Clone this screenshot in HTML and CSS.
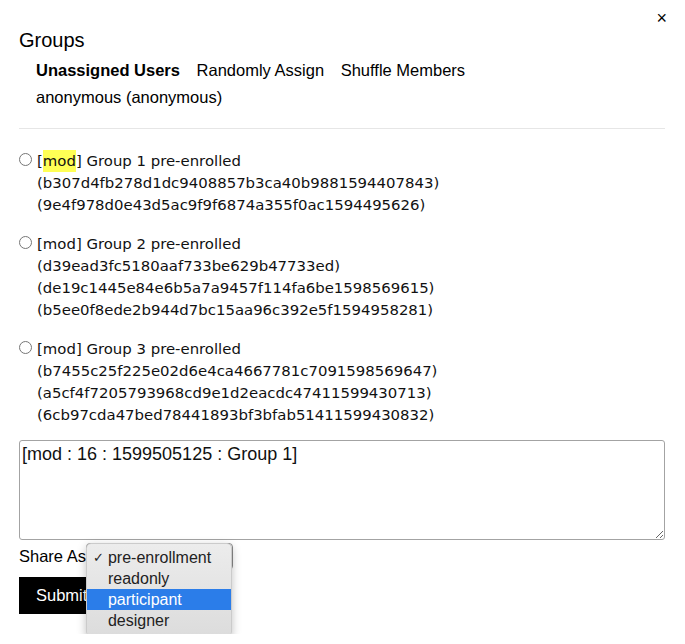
FILE: index.html
```html
<!DOCTYPE html>
<html lang="en">
<head>
  <meta charset="UTF-8" />
  <meta name="viewport" content="width=device-width, initial-scale=1.0"/>
  <title>Groups</title>
  <link rel="stylesheet" href="styles.css">
</head>
<body>

  <div class="modal">
    <button class="close">×</button>
    <h2>Groups</h2>

    <div class="tabs">
      <span class="tab active">Unassigned Users</span>
      <span class="tab">Randomly Assign</span>
      <span class="tab">Shuffle Members</span>
    </div>
    <div class="users">anonymous (anonymous)</div>

    <hr>

    <ul class="group-list">
      <li class="group">
        <input type="radio" name="group">
        <div class="group-text">
          <div>[<mark>mod</mark>] Group 1 pre-enrolled</div>
          <div>(b307d4fb278d1dc9408857b3ca40b9881594407843)</div>
          <div>(9e4f978d0e43d5ac9f9f6874a355f0ac1594495626)</div>
        </div>
      </li>
      <li class="group">
        <input type="radio" name="group">
        <div class="group-text">
          <div>[mod] Group 2 pre-enrolled</div>
          <div>(d39ead3fc5180aaf733be629b47733ed)</div>
          <div>(de19c1445e84e6b5a7a9457f114fa6be1598569615)</div>
          <div>(b5ee0f8ede2b944d7bc15aa96c392e5f1594958281)</div>
        </div>
      </li>
      <li class="group">
        <input type="radio" name="group">
        <div class="group-text">
          <div>[mod] Group 3 pre-enrolled</div>
          <div>(b7455c25f225e02d6e4ca4667781c7091598569647)</div>
          <div>(a5cf4f7205793968cd9e1d2eacdc47411599430713)</div>
          <div>(6cb97cda47bed78441893bf3bfab51411599430832)</div>
        </div>
      </li>
    </ul>

    <textarea class="share-text">[mod : 16 : 1599505125 : Group 1]</textarea>

    <div class="share-row">
      <span>Share As</span>
      <div class="select-box">
        <!-- open dropdown -->
        <ul class="options">
          <li class="checked">pre-enrollment</li>
          <li>readonly</li>
          <li class="hover">participant</li>
          <li>designer</li>
        </ul>
      </div>
    </div>

    <button class="submit">Submit</button>
  </div>

</body>
</html>
```

FILE: styles.css
```css
* { box-sizing: border-box; }
body {
  margin: 0;
  font-family: 'Liberation Sans', Arial, sans-serif;
  color: #000;
  background: #fff;
}
.modal {
  position: relative;
  padding: 28px 20px 20px 19px;
}
.close {
  position: absolute;
  top: 8px;
  right: 18px;
  border: none;
  background: none;
  padding: 0;
  font-family: 'Liberation Sans', Arial, sans-serif;
  font-size: 18px;
  color: #000;
  cursor: pointer;
}
h2 {
  margin: 0;
  font-size: 20px;
  font-weight: normal;
  line-height: 24px;
}
.tabs {
  margin: 6px 0 0 17px;
  font-size: 16.5px;
  line-height: 24px;
}
.tab {
  margin-right: 12px;
}
.tab.active {
  font-weight: bold;
}
.users {
  margin: 3px 0 0 17px;
  font-size: 16.5px;
  line-height: 24px;
}
hr {
  margin: 19px 0 0;
  border: none;
  border-top: 1px solid #e6e6e6;
}

.group-list {
  list-style: none;
  margin: 21px 0 0;
  padding: 0;
  font-family: 'DejaVu Sans', Verdana, sans-serif;
  font-size: 14.9px;
  line-height: 22px;
  color: #111;
}
.group {
  display: flex;
  gap: 5px;
  margin-bottom: 17px;
}
.group:last-child {
  margin-bottom: 0;
}
.group input {
  margin: 3px 0 0;
  width: 13px;
  height: 13px;
}
mark {
  background: #ffff55;
  color: #111;
  padding: 2px 0;
}

.share-text {
  display: block;
  width: 100%;
  height: 100px;
  margin-top: 14px;
  padding: 3px 2px;
  border: 1px solid #a3a3a3;
  border-radius: 3px;
  font-family: 'Liberation Sans', Arial, sans-serif;
  font-size: 18px;
  color: #111;
}

.share-row {
  display: flex;
  align-items: center;
  height: 27px;
  margin-top: 3px;
  font-size: 16.5px;
}
.select-box {
  position: relative;
  width: 147px;
  height: 27px;
  border: 1px solid #8a8a8a;
  border-radius: 4px;
  background: #f4f4f4;
}
.options {
  position: absolute;
  top: -1px;
  left: -1px;
  width: 146px;
  margin: 0;
  padding: 3px 0 5px;
  list-style: none;
  background: linear-gradient(#ececec, #dcdcdc);
  border: 1px solid #cbcbcb;
  border-radius: 5px;
  box-shadow: 0 3px 10px rgba(0,0,0,0.25);
  font-size: 16px;
  color: #222;
  z-index: 2;
}
.options li {
  position: relative;
  height: 21px;
  line-height: 21px;
  padding-left: 21px;
}
.options li.checked::before {
  content: '✓';
  position: absolute;
  left: 6px;
  font-family: 'DejaVu Sans', sans-serif;
  font-size: 13px;
}
.options li.hover {
  background: #2b7de9;
  color: #fff;
}

.submit {
  display: block;
  margin-top: 7px;
  height: 37px;
  padding: 0 17px;
  border: none;
  background: #000;
  color: #fff;
  font-family: 'Liberation Sans', Arial, sans-serif;
  font-size: 16.5px;
}
```
